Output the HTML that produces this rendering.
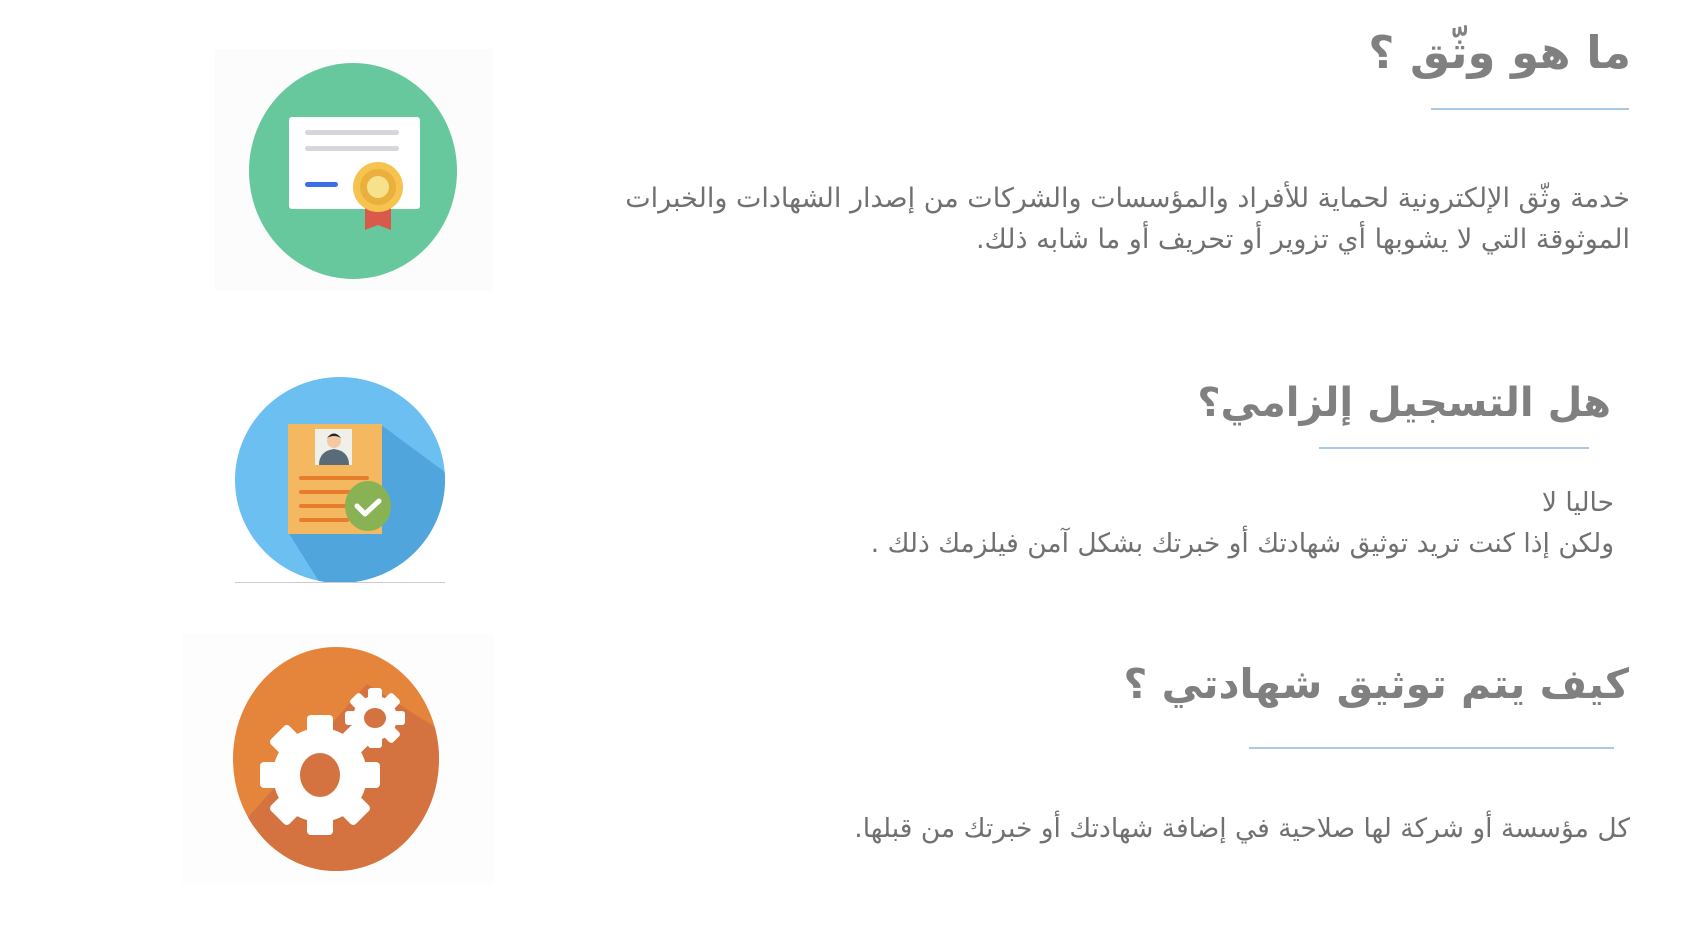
<!DOCTYPE html>
<html><head><meta charset="utf-8"><style>
html,body{margin:0;padding:0;background:#fff;width:1695px;height:945px;overflow:hidden;position:relative;font-family:"DejaVu Sans","Liberation Sans",sans-serif;}
.h{position:absolute;direction:rtl;color:#808080;font-weight:bold;font-size:46px;white-space:nowrap;line-height:1;}
.p{position:absolute;direction:rtl;color:#707070;font-size:26.5px;white-space:nowrap;line-height:41px;text-align:right;}
.u{position:absolute;height:2px;background:#a9c9e6;}
.box{position:absolute;}
</style></head><body>
<div class="h" style="right:64px;top:30px;font-size:45px;">ما هو وثّق ؟</div>
<div class="u" style="left:1431px;width:198px;top:108px;"></div>
<div class="p" style="right:65px;top:178px;font-size:27px;">خدمة وثّق الإلكترونية لحماية  للأفراد والمؤسسات والشركات من إصدار الشهادات والخبرات<br>الموثوقة  التي لا يشوبها أي تزوير أو تحريف أو ما شابه ذلك.</div>

<div class="h" style="right:84px;top:383px;font-size:40px;">هل التسجيل إلزامي؟</div>
<div class="u" style="left:1319px;width:270px;top:447px;"></div>
<div class="p" style="right:81px;top:482px;">حاليا لا<br>ولكن إذا كنت تريد توثيق شهادتك أو خبرتك بشكل آمن فيلزمك ذلك .</div>

<div class="h" style="right:66px;top:664px;font-size:41px;">كيف يتم توثيق شهادتي ؟</div>
<div class="u" style="left:1249px;width:365px;top:747px;"></div>
<div class="p" style="right:65px;top:808px;">كل مؤسسة أو شركة لها صلاحية في إضافة شهادتك أو خبرتك من قبلها.</div>

<svg class="box" style="left:215px;top:49px" width="278" height="242">
<rect width="278" height="242" fill="#fcfcfc"/>
<ellipse cx="138" cy="122" rx="104" ry="108" fill="#68c89d"/>
<rect x="74" y="68" width="131" height="92" rx="3" fill="#fff"/>
<rect x="90" y="81" width="94" height="5" rx="2.5" fill="#d4d6dc"/>
<rect x="90" y="97" width="94" height="5" rx="2.5" fill="#d4d6dc"/>
<rect x="90" y="133" width="33" height="5" rx="2.5" fill="#3a6fe9"/>
<path d="M150 150 h26 v31 l-13 -5 l-13 5z" fill="#d75a4a"/>
<circle cx="163" cy="138" r="25" fill="#f6c34f"/>
<circle cx="163" cy="138" r="18" fill="#e9b03e"/>
<circle cx="163" cy="138" r="11" fill="#f6e28c"/>
</svg>

<svg class="box" style="left:235px;top:377px" width="210" height="206">
<defs><clipPath id="c2"><ellipse cx="105" cy="103" rx="105" ry="103"/></clipPath></defs>
<ellipse cx="105" cy="103" rx="105" ry="103" fill="#6bbff1"/>
<path d="M145 47 L230 110 L230 230 L100 230 L53 155z" fill="#50a5dc" clip-path="url(#c2)"/>
<rect x="53" y="47" width="94" height="110" fill="#f4b861"/>
<rect x="80" y="52" width="37" height="36" fill="#f0f0ea"/>
<path d="M84 88 q0-14 15-16 q15 2 15 16z" fill="#596a78"/>
<circle cx="99" cy="64" r="7" fill="#f2c9a3"/>
<path d="M92 61 q7-9 14 0 q-7-4-14 0z" fill="#222"/>
<rect x="64" y="99" width="70" height="4" rx="2" fill="#e77d2c"/>
<rect x="64" y="113" width="58" height="4" rx="2" fill="#e77d2c"/>
<rect x="64" y="127" width="50" height="4" rx="2" fill="#e77d2c"/>
<rect x="64" y="141" width="50" height="4" rx="2" fill="#e77d2c"/>
<ellipse cx="133" cy="129" rx="23" ry="25" fill="#89b254"/>
<path d="M122 129 l8 8 l14 -13" stroke="#fff" stroke-width="5" fill="none" stroke-linecap="round" stroke-linejoin="round"/>
<rect x="0" y="205" width="210" height="1" fill="#ccc"/>
</svg>

<svg class="box" style="left:182px;top:634px" width="312" height="250">
<defs><clipPath id="c3"><ellipse cx="154" cy="125" rx="103" ry="112"/></clipPath></defs>
<rect width="312" height="250" fill="#fdfdfd"/>
<ellipse cx="154" cy="125" rx="103" ry="112" fill="#e4853b"/>
<path d="M185 50 L280 110 L280 260 L140 260 L60 190z" fill="#d4733f" clip-path="url(#c3)"/>
<g fill="#fff">
<circle cx="138" cy="141" r="47"/>
<g transform="translate(138 141)">
<rect x="-13" y="-60" width="26" height="120" rx="4"/>
<rect x="-13" y="-60" width="26" height="120" rx="4" transform="rotate(45)"/>
<rect x="-13" y="-60" width="26" height="120" rx="4" transform="rotate(90)"/>
<rect x="-13" y="-60" width="26" height="120" rx="4" transform="rotate(135)"/>
</g>
<circle cx="193" cy="84" r="22"/>
<g transform="translate(193 84)">
<rect x="-7" y="-30" width="14" height="60" rx="3"/>
<rect x="-7" y="-30" width="14" height="60" rx="3" transform="rotate(45)"/>
<rect x="-7" y="-30" width="14" height="60" rx="3" transform="rotate(90)"/>
<rect x="-7" y="-30" width="14" height="60" rx="3" transform="rotate(135)"/>
</g>
</g>
<ellipse cx="138" cy="141" rx="20" ry="22" fill="#d4733f"/>
<ellipse cx="193" cy="84" rx="11" ry="10" fill="#d4733f"/>
</svg>
</body></html>
